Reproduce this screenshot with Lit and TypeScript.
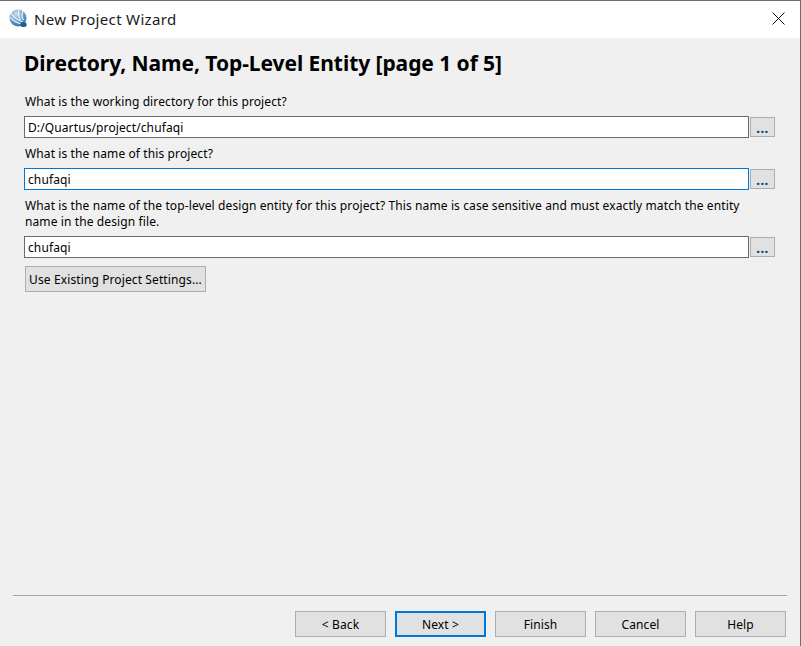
import { LitElement, html, css } from "lit";
import { customElement } from "lit/decorators.js";

const fields = [
  { label: "What is the working directory for this project?", value: "D:/Quartus/project/chufaqi", focus: false },
  { label: "What is the name of this project?", value: "chufaqi", focus: true },
  {
    label:
      "What is the name of the top-level design entity for this project? This name is case sensitive and must exactly match the entity name in the design file.",
    value: "chufaqi",
    focus: false,
  },
];

const footerButtons = ["< Back", "Next >", "Finish", "Cancel", "Help"];

@customElement("app-root")
export class AppRoot extends LitElement {
  static styles = css`
    :host {
      display: block;
    }
    .window {
      box-sizing: border-box;
      width: 801px;
      height: 646px;
      display: flex;
      flex-direction: column;
      background: #f0f0f0;
      border-top: 1px solid #6e6e6e;
      border-right: 1px solid #6e6e6e;
      font-family: "Noto Sans", "Liberation Sans", sans-serif;
      font-size: 12px;
      letter-spacing: 0.11px;
      color: #000;
    }
    .titlebar {
      flex: none;
      height: 37px;
      box-sizing: border-box;
      padding: 0 0 2px 9px;
      background: #fff;
      display: flex;
      align-items: center;
    }
    .logo {
      width: 19px;
      height: 20px;
      margin-right: 6px;
    }
    .title {
      flex: 1;
      font-size: 15px;
      letter-spacing: 0.33px;
      color: #1a1a1a;
    }
    .close {
      width: 13px;
      height: 13px;
      margin-right: 15px;
    }
    .content {
      flex: 1;
      padding: 0 25px 0 24px;
      display: flex;
      flex-direction: column;
    }
    h1 {
      margin: 12px 0 0;
      height: 28px;
      line-height: 26px;
      font-size: 21px;
      font-weight: 700;
      letter-spacing: -0.06px;
    }
    .field-label {
      margin-top: 8px;
      line-height: 16px;
      padding-right: 10px;
      padding-left: 1px;
    }
    .field-label.first {
      margin-top: 16px;
    }
    .row {
      display: flex;
      margin-top: 6px;
      gap: 1px;
      align-items: center;
    }
    .input {
      box-sizing: border-box;
      width: 725px;
      height: 22px;
      background: #fff;
      border: 1px solid #6a6a6a;
      padding-left: 3px;
      line-height: 21px;
    }
    .input.focus {
      border-color: #0078d7;
    }
    .dots {
      box-sizing: border-box;
      width: 25px;
      height: 20px;
      background: #e1e1e1;
      border: 1px solid #adadad;
      color: #12466f;
      font-size: 13px;
      font-weight: 800;
      letter-spacing: 0.4px;
      line-height: 20px;
      text-align: center;
    }
    .btn {
      box-sizing: border-box;
      height: 26px;
      background: #e1e1e1;
      border: 1px solid #adadad;
      display: flex;
      align-items: center;
      justify-content: center;
    }
    .existing {
      width: 181px;
      margin: 8px 0 0 1px;
    }
    .separator {
      flex: none;
      height: 1px;
      margin: 0 13px;
      background: #a6a6a6;
    }
    .footer {
      flex: none;
      height: 50px;
      box-sizing: border-box;
      padding: 15px 14px 0 0;
      display: flex;
      justify-content: flex-end;
      gap: 9px;
    }
    .footer .btn {
      width: 91px;
    }
    .footer .btn.default {
      border: 2px solid #0078d7;
    }
  `;

  render() {
    return html`<div class="window">
      <div class="titlebar">
        <svg class="logo" viewBox="0 0 19 20">
          <defs>
            <radialGradient id="g" cx="0.4" cy="0.25" r="0.85">
              <stop offset="0" stop-color="#c4dcf0" />
              <stop offset="0.55" stop-color="#6a9fcc" />
              <stop offset="1" stop-color="#2a5f94" />
            </radialGradient>
          </defs>
          <circle cx="9" cy="9" r="8.5" fill="url(#g)" />
          <path d="M1 8c3 4 7 6 12 7M2 4.5c3 4 7 7 12 8.5M10 1c-1 4-.5 7 1.5 10M14 2c-1.500 3-1.500 6 .5 9" fill="none" stroke="#f4f8fb" stroke-width="1.100" />
          <ellipse cx="14.500" cy="15.500" rx="3.200" ry="2.600" fill="#1f5f99" />
        </svg>
        <span class="title">New Project Wizard</span>
        <svg class="close" viewBox="0 0 13 13">
          <path d="M.5.5l12 12M12.5.5l-12 12" stroke="#111" stroke-width="1" fill="none" />
        </svg>
      </div>
      <div class="content">
        <h1>Directory, Name, Top-Level Entity [page 1 of 5]</h1>
        ${fields.map(
          (f, i) => html`<div class="field-label ${i === 0 ? "first" : ""}">${f.label}</div>
            <div class="row">
              <div class="input ${f.focus ? "focus" : ""}">${f.value}</div>
              <div class="dots">...</div>
            </div>`
        )}
        <div class="btn existing">Use Existing Project Settings...</div>
      </div>
      <div class="separator"></div>
      <div class="footer">
        ${footerButtons.map(
          (b) => html`<div class="btn ${b === "Next >" ? "default" : ""}">${b}</div>`
        )}
      </div>
    </div>`;
  }
}
